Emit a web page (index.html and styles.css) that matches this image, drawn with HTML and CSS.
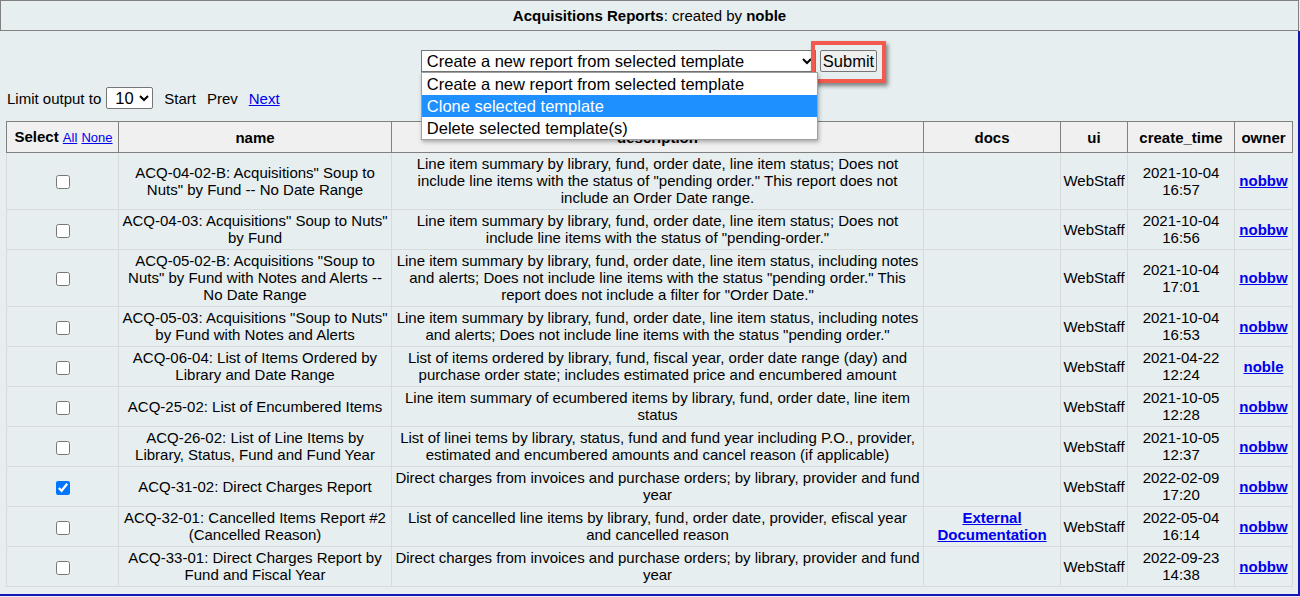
FILE: index.html
```html
<!DOCTYPE html>
<html>
<head>
<meta charset="utf-8">
<title>Acquisitions Reports</title>
<link rel="stylesheet" href="styles.css">
</head>
<body>
<div class="frame">
  <div class="titlebar"><b>Acquisitions Reports</b>: created by <b>noble</b></div>
  <div class="content">
    <form class="actions">
      <div class="picker">
        <select class="action-select">
          <option>Create a new report from selected template</option>
          <option>Clone selected template</option>
          <option>Delete selected template(s)</option>
        </select>
        <button type="button" class="submit">Submit</button>
        <div class="highlight"></div>
        <div class="dropdown">
          <div class="opt">Create a new report from selected template</div>
          <div class="opt sel">Clone selected template</div>
          <div class="opt">Delete selected template(s)</div>
        </div>
      </div>
    </form>
    <div class="limit">
      <span>Limit output to</span>
      <select class="limit-select"><option>10</option></select>
      <span class="nav">Start</span>
      <span class="nav">Prev</span>
      <a class="nav" href="#">Next</a>
    </div>
    <table class="reports">
      <colgroup>
        <col class="c-sel"><col class="c-name"><col class="c-desc"><col class="c-docs"><col class="c-ui"><col class="c-time"><col class="c-owner">
      </colgroup>
      <thead>
        <tr>
          <th class="th-select">Select <a href="#" class="small">All</a> <a href="#" class="small">None</a></th>
          <th>name</th>
          <th>description</th>
          <th>docs</th>
          <th>ui</th>
          <th>create_time</th>
          <th>owner</th>
        </tr>
      </thead>
      <tbody>
        <tr>
          <td><input type="checkbox"></td>
          <td>ACQ-04-02-B: Acquisitions" Soup to Nuts" by Fund -- No Date Range</td>
          <td>Line item summary by library, fund, order date, line item status; Does not include line items with the status of "pending order." This report does not include an Order Date range.</td>
          <td></td>
          <td>WebStaff</td>
          <td>2021-10-04 16:57</td>
          <td><a href="#" class="owner">nobbw</a></td>
        </tr>
        <tr>
          <td><input type="checkbox"></td>
          <td>ACQ-04-03: Acquisitions" Soup to Nuts" by Fund</td>
          <td>Line item summary by library, fund, order date, line item status; Does not include line items with the status of "pending-order."</td>
          <td></td>
          <td>WebStaff</td>
          <td>2021-10-04 16:56</td>
          <td><a href="#" class="owner">nobbw</a></td>
        </tr>
        <tr>
          <td><input type="checkbox"></td>
          <td>ACQ-05-02-B: Acquisitions "Soup to Nuts" by Fund with Notes and Alerts -- No Date Range</td>
          <td>Line item summary by library, fund, order date, line item status, including notes and alerts; Does not include line items with the status "pending order." This report does not include a filter for "Order Date."</td>
          <td></td>
          <td>WebStaff</td>
          <td>2021-10-04 17:01</td>
          <td><a href="#" class="owner">nobbw</a></td>
        </tr>
        <tr>
          <td><input type="checkbox"></td>
          <td>ACQ-05-03: Acquisitions "Soup to Nuts" by Fund with Notes and Alerts</td>
          <td>Line item summary by library, fund, order date, line item status, including notes and alerts; Does not include line items with the status "pending order."</td>
          <td></td>
          <td>WebStaff</td>
          <td>2021-10-04 16:53</td>
          <td><a href="#" class="owner">nobbw</a></td>
        </tr>
        <tr>
          <td><input type="checkbox"></td>
          <td>ACQ-06-04: List of Items Ordered by Library and Date Range</td>
          <td>List of items ordered by library, fund, fiscal year, order date range (day) and purchase order state; includes estimated price and encumbered amount</td>
          <td></td>
          <td>WebStaff</td>
          <td>2021-04-22 12:24</td>
          <td><a href="#" class="owner">noble</a></td>
        </tr>
        <tr>
          <td><input type="checkbox"></td>
          <td>ACQ-25-02: List of Encumbered Items</td>
          <td>Line item summary of ecumbered items by library, fund, order date, line item status</td>
          <td></td>
          <td>WebStaff</td>
          <td>2021-10-05 12:28</td>
          <td><a href="#" class="owner">nobbw</a></td>
        </tr>
        <tr>
          <td><input type="checkbox"></td>
          <td>ACQ-26-02: List of Line Items by Library, Status, Fund and Fund Year</td>
          <td>List of linei tems by library, status, fund and fund year including P.O., provider, estimated and encumbered amounts and cancel reason (if applicable)</td>
          <td></td>
          <td>WebStaff</td>
          <td>2021-10-05 12:37</td>
          <td><a href="#" class="owner">nobbw</a></td>
        </tr>
        <tr>
          <td><input type="checkbox" checked></td>
          <td>ACQ-31-02: Direct Charges Report</td>
          <td>Direct charges from invoices and purchase orders; by library, provider and fund year</td>
          <td></td>
          <td>WebStaff</td>
          <td>2022-02-09 17:20</td>
          <td><a href="#" class="owner">nobbw</a></td>
        </tr>
        <tr>
          <td><input type="checkbox"></td>
          <td>ACQ-32-01: Cancelled Items Report #2 (Cancelled Reason)</td>
          <td>List of cancelled line items by library, fund, order date, provider, efiscal year and cancelled reason</td>
          <td><a href="#" class="owner">External Documentation</a></td>
          <td>WebStaff</td>
          <td>2022-05-04 16:14</td>
          <td><a href="#" class="owner">nobbw</a></td>
        </tr>
        <tr>
          <td><input type="checkbox"></td>
          <td>ACQ-33-01: Direct Charges Report by Fund and Fiscal Year</td>
          <td>Direct charges from invoices and purchase orders; by library, provider and fund year</td>
          <td></td>
          <td>WebStaff</td>
          <td>2022-09-23 14:38</td>
          <td><a href="#" class="owner">nobbw</a></td>
        </tr>
      </tbody>
    </table>
  </div>
</div>
</body>
</html>
```

FILE: styles.css
```css
* { box-sizing: border-box; }

html, body {
  margin: 0;
  padding: 0;
  background: #e6eef0;
}

body {
  font-family: "Liberation Sans", Arial, sans-serif;
  font-size: 15px;
  line-height: 17px;
  color: #000;
}

a { color: #0000ee; }

.frame {
  width: 1300px;
  height: 597px;
  display: flex;
  flex-direction: column;
}

.titlebar {
  width: 1299px;
  height: 31px;
  border: 1px solid #808080;
  text-align: center;
  padding: 6px 0;
}

.content {
  width: 1300px;
  height: 565px;
  border-right: 2px solid #1414b8;
  border-bottom: 2px solid #1414b8;
  padding: 19px 6px 0 6px;
}

.actions {
  display: flex;
  justify-content: center;
  margin: 0;
}

.picker {
  position: relative;
  display: flex;
  gap: 4px;
}

.action-select {
  width: 395px;
  height: 22px;
  font-family: "Liberation Sans", Arial, sans-serif;
  font-size: 16.5px;
  color: #000;
  background: #fff;
  border: 1px solid #767676;
  border-radius: 0;
  padding: 0 0 0 1px;
  margin: 0;
}

.submit {
  height: 22px;
  font-family: "Liberation Sans", Arial, sans-serif;
  font-size: 16.5px;
  color: #000;
  background: #efefef;
  border: 1px solid #767676;
  border-radius: 2px;
  padding: 0 2px;
  margin: 0;
  line-height: 18px;
}

.highlight {
  position: absolute;
  left: 390px;
  top: -9px;
  width: 75px;
  height: 42px;
  border: 4px solid #f25a4e;
  box-shadow: 2px 3px 4px rgba(0, 0, 0, 0.45);
  pointer-events: none;
}

.dropdown {
  position: absolute;
  left: 0;
  top: 22px;
  width: 397px;
  background: #fff;
  border: 1px solid #a0a0a0;
  box-shadow: 1px 2px 4px rgba(0, 0, 0, 0.3);
  font-size: 16.5px;
  line-height: 22px;
}

.opt {
  height: 22px;
  padding-left: 5px;
  white-space: nowrap;
}

.opt.sel {
  background: #1e90ff;
  color: #fff;
}

.limit {
  display: flex;
  align-items: center;
  margin-top: 15px;
  padding-left: 1px;
  height: 22px;
}

.limit-select {
  width: 47px;
  height: 22px;
  margin: 0 0 0 5px;
  font-family: "Liberation Sans", Arial, sans-serif;
  font-size: 16.5px;
  background: #fff;
  border: 1px solid #767676;
  border-radius: 2px;
  padding: 0 0 0 4px;
  color: #000;
}

.nav { margin-left: 11px; }

.reports {
  margin-top: 12px;
  width: 1286px;
  table-layout: fixed;
  border-collapse: collapse;
}

.c-sel { width: 112px; }
.c-name { width: 273px; }
.c-desc { width: 532px; }
.c-docs { width: 137px; }
.c-ui { width: 67px; }
.c-time { width: 107px; }
.c-owner { width: 58px; }

.reports th {
  background: #f0f0f0;
  border: 1px solid #808080;
  padding: 6px 2px 6px;
  font-weight: bold;
  text-align: center;
  white-space: nowrap;
}

.reports th.th-select { padding-left: 4px; }

.reports th .small {
  font-weight: normal;
  font-size: 13px;
}

.reports td {
  border: 1px solid #d6dcdc;
  padding: 2px 2px 3px;
  text-align: center;
  vertical-align: middle;
}

.reports td input[type="checkbox"] {
  width: 14px;
  height: 14px;
  margin: 0;
  vertical-align: middle;
}

.owner { font-weight: bold; }
```
